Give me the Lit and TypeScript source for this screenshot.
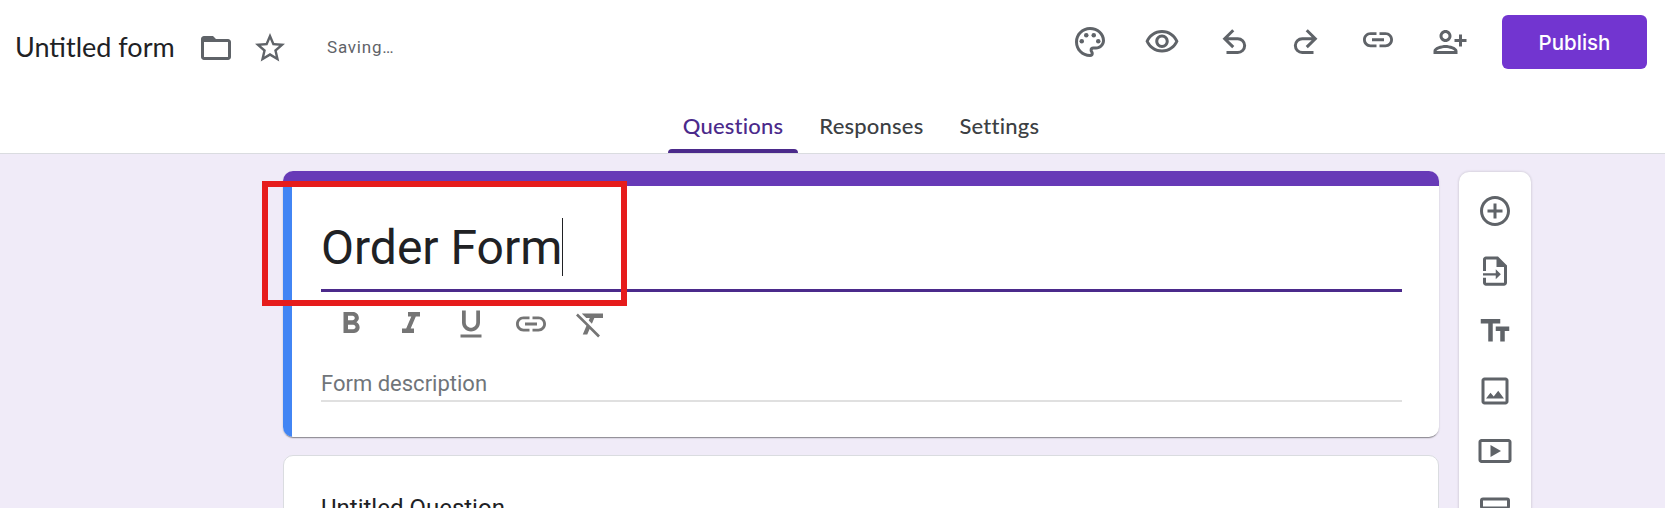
import { LitElement, html, css, svg } from "lit";
import { customElement } from "lit/decorators.js";

const P = {
  folder: svg`<path d="M20 6h-8l-2-2H4c-1.1 0-2 .9-2 2v12c0 1.1.9 2 2 2h16c1.1 0 2-.9 2-2V8c0-1.1-.9-2-2-2zm0 12H4V8h16v10z"/>`,
  star: svg`<path d="M22 9.24l-7.19-.62L12 2 9.19 8.63 2 9.24l5.46 4.73L5.82 21 12 17.27 18.18 21l-1.63-7.03L22 9.24zM12 15.4l-3.76 2.27 1-4.28-3.32-2.88 4.38-.38L12 6.1l1.71 4.04 4.38.38-3.32 2.88 1 4.28L12 15.4z"/>`,
  palette: svg`<path d="M12 22C6.49 22 2 17.51 2 12S6.49 2 12 2s10 4.04 10 9c0 3.31-2.69 6-6 6h-1.77c-.28 0-.5.22-.5.5 0 .12.05.23.13.33.41.47.64 1.06.64 1.67A2.5 2.5 0 0 1 12 22zm0-18c-4.41 0-8 3.59-8 8s3.59 8 8 8c.28 0 .5-.22.5-.5a.54.54 0 0 0-.14-.35c-.41-.46-.63-1.05-.63-1.65a2.5 2.5 0 0 1 2.5-2.5H16c2.21 0 4-1.79 4-4 0-3.86-3.59-7-8-7z"/><circle cx="6.5" cy="11.5" r="1.5"/><circle cx="9.5" cy="7.5" r="1.5"/><circle cx="14.5" cy="7.5" r="1.5"/><circle cx="17.5" cy="11.5" r="1.5"/>`,
  eye: svg`<path d="M12 6c3.79 0 7.17 2.13 8.82 5.5C19.17 14.87 15.79 17 12 17s-7.17-2.13-8.82-5.5C4.83 8.13 8.21 6 12 6m0-2C7 4 2.73 7.11 1 11.5 2.73 15.89 7 19 12 19s9.27-3.11 11-7.5C21.27 7.11 17 4 12 4zm0 5c1.38 0 2.5 1.12 2.5 2.5S13.38 14 12 14s-2.5-1.12-2.5-2.5S10.62 9 12 9m0-2c-2.48 0-4.5 2.02-4.5 4.5S9.52 16 12 16s4.5-2.02 4.5-4.5S14.48 7 12 7z"/>`,
  undo: svg`<path d="M11.5 4.2L5.8 9.8L11.5 15.4M6 9.8H14.5a4.6 4.6 0 0 1 0 9.2H7" fill="none" stroke="currentColor" stroke-width="2"/>`,
  redo: svg`<path d="M12.5 4.2L18.2 9.8L12.5 15.4M18 9.8H9.5a4.6 4.6 0 0 0 0 9.2H17" fill="none" stroke="currentColor" stroke-width="2"/>`,
  link: svg`<path d="M3.9 12c0-1.71 1.39-3.1 3.1-3.1h4V7H7c-2.76 0-5 2.24-5 5s2.24 5 5 5h4v-1.9H7c-1.71 0-3.1-1.39-3.1-3.1zM8 13h8v-2H8v2zm9-6h-4v1.9h4c1.71 0 3.1 1.39 3.1 3.1s-1.39 3.1-3.1 3.1h-4V17h4c2.76 0 5-2.24 5-5s-2.24-5-5-5z"/>`,
  linkUp: svg`<g transform="translate(0 -1.5)"><path d="M3.9 12c0-1.71 1.39-3.1 3.1-3.1h4V7H7c-2.76 0-5 2.24-5 5s2.24 5 5 5h4v-1.9H7c-1.71 0-3.1-1.39-3.1-3.1zM8 13h8v-2H8v2zm9-6h-4v1.9h4c1.71 0 3.1 1.39 3.1 3.1s-1.39 3.1-3.1 3.1h-4V17h4c2.76 0 5-2.24 5-5s-2.24-5-5-5z"/></g>`,
  person: svg`<g transform="translate(24 0) scale(-1 1)"><path d="M15 12c2.21 0 4-1.79 4-4s-1.79-4-4-4-4 1.79-4 4 1.79 4 4 4zm0-6c1.1 0 2 .9 2 2s-.9 2-2 2-2-.9-2-2 .9-2 2-2zm0 8c-2.67 0-8 1.34-8 4v2h16v-2c0-2.66-5.33-4-8-4zm-6 4c.22-.72 3.31-2 6-2 2.7 0 5.8 1.29 6 2H9zm-3-3v-3h3v-2H6V7H4v3H1v2h3v3h2z"/></g>`,
  bold: svg`<path d="M15.6 10.79c.97-.67 1.65-1.77 1.65-2.79 0-2.26-1.75-4-4-4H7v14h7.04c2.09 0 3.71-1.7 3.71-3.79 0-1.52-.86-2.82-2.15-3.42zM10 6.5h3c.83 0 1.5.67 1.5 1.5s-.67 1.5-1.5 1.5h-3v-3zm3.5 9H10v-3h3.5c.83 0 1.5.67 1.5 1.5s-.67 1.5-1.5 1.5z"/>`,
  italic: svg`<path d="M10 4v3h2.21l-3.42 8H6v3h8v-3h-2.21l3.42-8H18V4z"/>`,
  underline: svg`<path d="M12 17c3.31 0 6-2.69 6-6V3h-2.5v8c0 1.93-1.57 3.5-3.5 3.5S8.5 12.93 8.5 11V3H6v8c0 3.31 2.69 6 6 6zm-7 2v2h14v-2H5z"/>`,
  clear: svg`<path d="M3.27 5L2 6.27l6.97 6.97L6.5 19h3l1.57-3.66L16.73 21 18 19.73 3.55 5.27 3.27 5zM6 5v.18L8.82 8h2.4l-.72 1.68 2.1 2.1L14.21 8H20V5H6z"/>`,
  add: svg`<path d="M13 7h-2v4H7v2h4v4h2v-4h4v-2h-4V7zm-1-5C6.48 2 2 6.48 2 12s4.48 10 10 10 10-4.48 10-10S17.52 2 12 2zm0 18c-4.41 0-8-3.59-8-8s3.59-8 8-8 8 3.59 8 8-3.59 8-8 8z"/>`,
  importDoc: svg`<path d="M14 2.4H6c-1.1 0-2 .9-2 2V12h2V4.4h7v5h5V19.8H6V16.5H4v3.3c0 1.1.9 2 2 2h12c1.1 0 2-.9 2-2V8.4l-6-6z"/><path d="M4 13.5h8.5v-2.6l3.4 3.3-3.4 3.3V15H4z"/>`,
  title: svg`<path d="M2.5 4v3h5v12h3V7h5V4h-13zm19 5h-9v3h3v7h3v-7h3V9z"/>`,
  image: svg`<path d="M19 5v14H5V5h14m0-2H5c-1.1 0-2 .9-2 2v14c0 1.1.9 2 2 2h14c1.1 0 2-.9 2-2V5c0-1.1-.9-2-2-2zm-4.86 8.86l-3 3.87L9 13.14 6 17h12l-3.86-5.14z"/>`,
  video: svg`<path d="M21 4H3c-1.1 0-2 .9-2 2v12c0 1.1.9 2 2 2h18c1.1 0 2-.9 2-2V6c0-1.1-.9-2-2-2zm0 14H3V6h18v12z"/><path d="M9 8v8l7-4z"/>`,
  section: svg`<rect x="3" y="4" width="18" height="6" rx="1" fill="none" stroke="currentColor" stroke-width="2"/><rect x="3" y="14" width="18" height="6" rx="1" fill="none" stroke="currentColor" stroke-width="2"/>`,
};

const icon = (p: unknown, cls = "") =>
  html`<svg class="ic ${cls}" viewBox="0 0 24 24" fill="currentColor">${p}</svg>`;

@customElement("app-root")
export class AppRoot extends LitElement {
  static styles = css`
    :host {
      display: block;
      position: relative;
      width: 1665px;
      height: 508px;
      overflow: hidden;
      background: #f0ebf8;
      font-family: Roboto, "Liberation Sans", sans-serif;
      color: #202124;
    }
    .ic { display: block; flex: none; width: 36px; height: 36px; }

    header {
      height: 154px;
      box-sizing: border-box;
      background: #fff;
      border-bottom: 1px solid #dadce0;
      display: flex;
      flex-direction: column;
    }
    .top {
      height: 84px;
      box-sizing: border-box;
      flex: none;
      display: flex;
      align-items: flex-start;
      padding: 15px 18px 0 15px;
    }
    .left { display: flex; align-items: center; height: 66px; }
    .doc-title {
      font-family: Lato, "Noto Sans", sans-serif;
      font-size: 27px;
      line-height: 36px;
      color: #202124;
      width: 183px;
      margin-top: -3px;
    }
    .left .ic { color: #5f6368; }
    .star { margin-left: 18px; }
    .saving { margin-left: 39px; font-size: 17px; color: #5f6368; letter-spacing: .8px; margin-top: -2px; }
    .actions {
      margin-left: auto;
      display: flex;
      align-items: center;
      height: 54px;
      color: #5f6368;
    }
    .act { width: 72px; display: flex; justify-content: center; margin-top: -1px; }
    .publish {
      margin-left: 16px;
      width: 145px;
      height: 54px;
      border-radius: 6px;
      background: #7235d0;
      color: #fff;
      display: flex;
      align-items: center;
      justify-content: center;
      font: 500 20.5px Inter, Roboto, sans-serif;
    }
    .tabs {
      flex: 1;
      display: flex;
      justify-content: center;
      align-items: flex-end;
      gap: 6px;
      padding-left: 57px;
    }
    .tab {
      padding: 14px 15px 0;
      height: 69px;
      display: flex;
      align-items: center;
      box-sizing: border-box;
      font: 500 22px Lato, Roboto, sans-serif;
      letter-spacing: .2px;
      color: #3c4043;
      position: relative;
    }
    .tab.on { color: #4b2a8b; }
    .tab.on::after {
      content: "";
      position: absolute;
      left: 0; right: 0; bottom: 0;
      height: 4px;
      background: #4b2a8b;
      border-radius: 4px 4px 0 0;
    }

    main {
      display: flex;
      align-items: flex-start;
      gap: 20px;
      padding: 17px 0 0 283px;
    }
    .col { width: 1156px; display: flex; flex-direction: column; gap: 18px; flex: none; }
    .card1 {
      border-radius: 10px;
      overflow: hidden;
      background: #fff;
      box-shadow: 0 2px 1px -1px rgba(0,0,0,.3), 0 1px 2px rgba(0,0,0,.2);
      height: 266px;
      display: flex;
      flex-direction: column;
    }
    .band { height: 15px; background: #673ab7; flex: none; }
    .body1 {
      flex: 1;
      border-left: 9px solid #4285f4;
      padding: 0 37px 0 29px;
    }
    .title-field {
      height: 106px;
      box-sizing: border-box;
      border-bottom: 3px solid #4b2a8b;
      display: flex;
      align-items: flex-start;
      padding-top: 32px;
    }
    .title-text { font-size: 48px; line-height: 58px; color: #202124; margin-top: 1px; }
    .caret { width: 1px; height: 58px; background: #202124; }
    .fmt {
      display: flex;
      gap: 24px;
      color: #757575;
      padding: 14px 0 0 12px;
      height: 36px;
    }
    .desc {
      margin-top: 27px;
      font-size: 22px;
      line-height: 30px;
      height: 30px;
      color: #70757a;
      border-bottom: 2px solid #e0e0e0;
      padding-bottom: 1px;
    }
    .card2 {
      background: #fff;
      border: 1px solid #dadce0;
      border-radius: 10px;
      height: 200px;
      padding: 40px 0 0 37px;
      font-size: 24px;
      line-height: 24px;
      color: #202124;
    }
    .tools {
      margin-top: 1px;
      width: 72px;
      flex: none;
      background: #fff;
      border-radius: 10px;
      box-shadow: 0 0 3px rgba(0,0,0,.2);
      display: flex;
      flex-direction: column;
      align-items: center;
      gap: 24px;
      padding-top: 21px;
      height: 500px;
      color: #5f6368;
    }
    .mark {
      position: absolute;
      left: 262px;
      top: 181px;
      width: 365px;
      height: 125px;
      box-sizing: border-box;
      border: 6px solid #e61c1c;
    }
  `;

  render() {
    return html`
      <header>
        <div class="top">
          <div class="left">
            <span class="doc-title">Untitled form</span>
            ${icon(P.folder)}
            ${icon(P.star, "star")}
            <span class="saving">Saving…</span>
          </div>
          <div class="actions">
            ${[P.palette, P.eye, P.undo, P.redo, P.linkUp, P.person].map(
              (p) => html`<div class="act">${icon(p)}</div>`
            )}
            <div class="publish">Publish</div>
          </div>
        </div>
        <div class="tabs">
          <div class="tab on">Questions</div>
          <div class="tab">Responses</div>
          <div class="tab">Settings</div>
        </div>
      </header>
      <main>
        <div class="col">
          <section class="card1">
            <div class="band"></div>
            <div class="body1">
              <div class="title-field">
                <span class="title-text">Order Form</span><span class="caret"></span>
              </div>
              <div class="fmt">
                ${[P.bold, P.italic, P.underline, P.link, P.clear].map((p) => icon(p))}
              </div>
              <div class="desc">Form description</div>
            </div>
          </section>
          <section class="card2">Untitled Question</section>
        </div>
        <aside class="tools">
          ${[P.add, P.importDoc, P.title, P.image, P.video, P.section].map((p) => icon(p))}
        </aside>
      </main>
      <div class="mark"></div>
    `;
  }
}
